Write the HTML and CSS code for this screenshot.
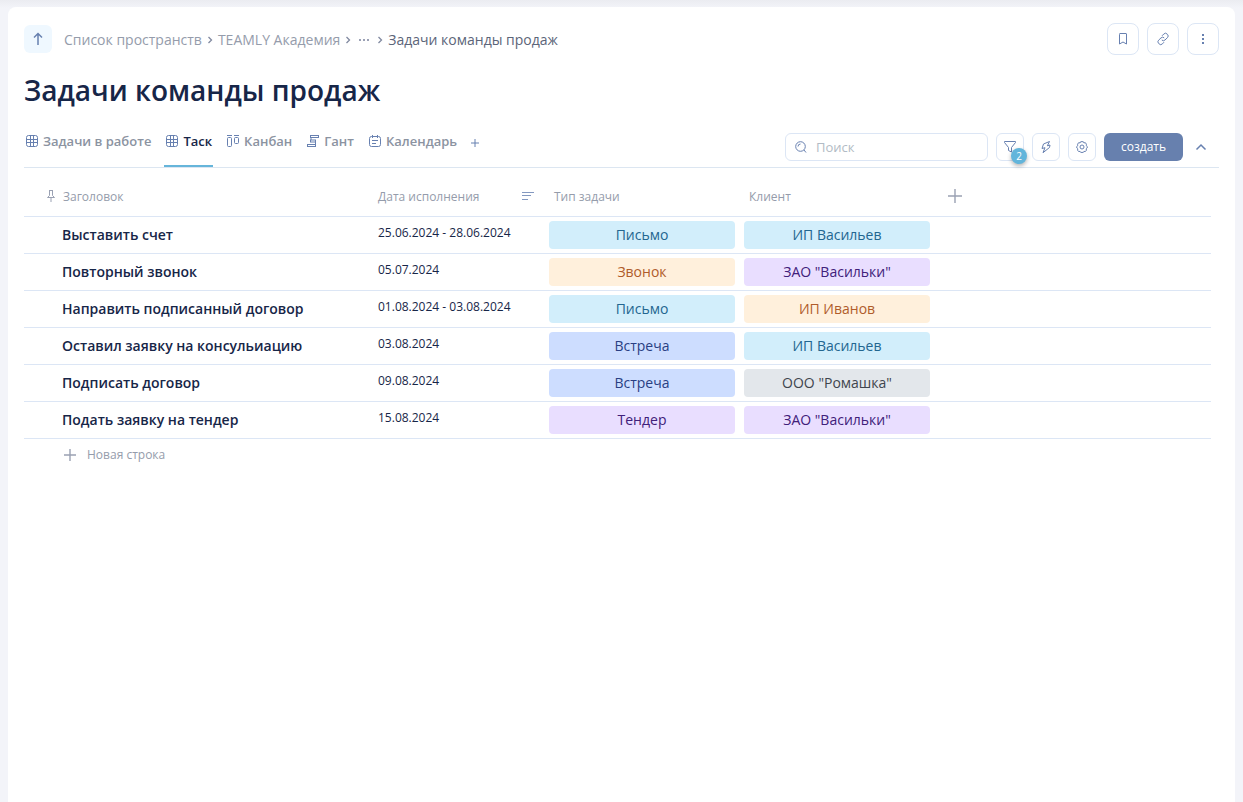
FILE: index.html
```html
<!DOCTYPE html>
<html lang="ru">
<head>
<meta charset="utf-8">
<title>Задачи команды продаж</title>
<link rel="stylesheet" href="styles.css">
</head>
<body>
<main class="panel">
  <header class="topbar">
    <button class="up" type="button" aria-label="Вверх">
      <svg width="16" height="16" viewBox="0 0 16 16"><path d="M8 14V2.500M4 6.500l4-4 4 4"/></svg>
    </button>
    <nav class="crumbs" aria-label="Путь">
      <a href="#">Список пространств</a>
      <svg class="sep" width="6" height="8" viewBox="0 0 6 8"><path d="M1.500 1l3 3-3 3"/></svg>
      <a href="#">TEAMLY Академия</a>
      <svg class="sep" width="6" height="8" viewBox="0 0 6 8"><path d="M1.500 1l3 3-3 3"/></svg>
      <button class="more" type="button" aria-label="Ещё">
        <svg width="12" height="8" viewBox="0 0 12 8"><path d="M1 3h2v2H1zM5 3h2v2H5zM9 3h2v2H9z"/></svg>
      </button>
      <svg class="sep" width="6" height="8" viewBox="0 0 6 8"><path d="M1.500 1l3 3-3 3"/></svg>
      <span class="current">Задачи команды продаж</span>
    </nav>
    <div class="actions">
      <button class="square" type="button" aria-label="В закладки">
        <svg width="16" height="16" viewBox="0 0 16 16"><path d="M4.500 3.500v9.500l3.500-2 3.500 2V3a.5.5 0 0 0-.5-.5H5a.5.5 0 0 0-.5.5z"/></svg>
      </button>
      <button class="square" type="button" aria-label="Скопировать ссылку">
        <svg width="16" height="16" viewBox="0 0 16 16"><path d="M7 4.800l1.800-1.800a2.300 2.300 0 0 1 3.300 0l.4.400a2.300 2.300 0 0 1 0 3.200L10 9a2.300 2.300 0 0 1-3.200 0M9 11.200l-1.600 1.700a2.300 2.300 0 0 1-3.300 0l-.5-.5a2.300 2.300 0 0 1 0-3.200L6 6.900a2.300 2.300 0 0 1 3.200 0"/></svg>
      </button>
      <button class="square" type="button" aria-label="Меню">
        <svg class="solid" width="16" height="16" viewBox="0 0 16 16"><path d="M7 3h2v2H7zM7 7h2v2H7zM7 11h2v2H7z"/></svg>
      </button>
    </div>
  </header>

  <h1>Задачи команды продаж</h1>

  <div class="viewbar">
    <nav class="tabs" aria-label="Представления">
      <a class="tab" href="#"><svg width="14" height="14" viewBox="0 0 14 14"><rect x="1.500" y="1.500" width="11" height="11" rx="2"/><path d="M5.500 1.500v11M8.500 1.500v11M1.500 5.500h11M1.500 8.500h11"/></svg>Задачи в работе</a>
      <a class="tab active" href="#" aria-current="page"><svg width="14" height="14" viewBox="0 0 14 14"><rect x="1.500" y="1.500" width="11" height="11" rx="2"/><path d="M5.500 1.500v11M8.500 1.500v11M1.500 5.500h11M1.500 8.500h11"/></svg>Таск</a>
      <a class="tab" href="#"><svg width="14" height="14" viewBox="0 0 14 14"><path d="M1 1.500h5M8 1.500h5"/><rect x="1.500" y="3.500" width="4" height="9" rx="1"/><rect x="8.500" y="3.500" width="4" height="6" rx="1"/></svg>Канбан</a>
      <a class="tab" href="#"><svg width="14" height="14" viewBox="0 0 14 14"><rect x="4.500" y="1.500" width="8" height="2"/><rect x="4.500" y="6" width="5" height="2"/><rect x="1.500" y="10.500" width="8" height="2"/><path d="M5 3.500v2.500M9.500 8v2.500"/></svg>Гант</a>
      <a class="tab" href="#"><svg width="14" height="14" viewBox="0 0 14 14"><rect x="1.500" y="2.500" width="11" height="10" rx="2"/><path d="M4.500 1v3M9.500 1v3M4 6.500h6M4 9.500h4"/></svg>Календарь</a>
      <button class="addview" type="button" aria-label="Добавить представление"><svg width="10" height="10" viewBox="0 0 10 10"><path d="M5 1v8M1 5h8"/></svg></button>
    </nav>
    <div class="tools">
      <label class="search">
        <svg width="14" height="14" viewBox="0 0 14 14"><circle cx="6.500" cy="6.500" r="4.800"/><path d="M10 10l2 2.500M4 6.500a2.500 2.500 0 0 1 2.500-2.500"/></svg>
        <input type="text" placeholder="Поиск" aria-label="Поиск">
      </label>
      <button class="tool" type="button" aria-label="Фильтр">
        <svg width="14" height="14" viewBox="0 0 14 14"><path d="M1.500 1.500h11v1L8.500 7.500v4.500l-3-1.500v-3L1.500 2.500z"/></svg>
        <span class="count">2</span>
      </button>
      <button class="tool" type="button" aria-label="Автоматизация">
        <svg width="14" height="14" viewBox="0 0 14 14"><path d="M10.500 1.500L4.500 4l-1.500 4.500 3-.8-2 5 6.500-5.200.5-2.500-2.700.8z"/></svg>
      </button>
      <button class="tool" type="button" aria-label="Настройки">
        <svg width="14" height="14" viewBox="0 0 14 14"><circle cx="7" cy="7" r="2"/><path d="M5.700 1.700h2.600l.6 1.200 1.500-.2 1 1.500-.2 1.300 1 .9v1.600l-1 .9.200 1.300-1 1.300-1.500-.1-.6 1H5.700l-.6-1-1.500.1-1-1.300.2-1.300-1-.9V6.400l1-.9-.2-1.300 1-1.500 1.500.2z"/></svg>
      </button>
      <button class="create" type="button">создать</button>
      <button class="collapse" type="button" aria-label="Свернуть"><svg width="12" height="8" viewBox="0 0 12 8"><path d="M1.500 6.500L6 2l4.500 4.500"/></svg></button>
    </div>
  </div>

  <div class="tablewrap">
    <table>
      <colgroup><col class="c-title"><col class="c-date"><col class="c-tag"><col class="c-tag"><col></colgroup>
      <thead>
        <tr>
          <th><span class="head pinned"><svg width="10" height="14" viewBox="0 0 10 14"><path d="M3 1.500h4M3.500 1.500v5l-2 2h7l-2-2v-5M5 8.500V13"/></svg>Заголовок</span></th>
          <th><span class="head sorted">Дата исполнения<svg width="12" height="10" viewBox="0 0 12 10"><path d="M0 1.500h12M0 4.500h9M0 8.500h6"/></svg></span></th>
          <th>Тип задачи</th>
          <th>Клиент</th>
          <th><button class="addcol" type="button" aria-label="Добавить колонку"><svg width="14" height="14" viewBox="0 0 14 14"><path d="M7 0v14M0 7h14"/></svg></button></th>
        </tr>
      </thead>
      <tbody>
        <tr><td class="name">Выставить счет</td><td class="date">25.06.2024 - 28.06.2024</td><td class="cell"><span class="tag sky">Письмо</span></td><td class="cell"><span class="tag sky">ИП Васильев</span></td><td></td></tr>
        <tr><td class="name">Повторный звонок</td><td class="date">05.07.2024</td><td class="cell"><span class="tag sand">Звонок</span></td><td class="cell"><span class="tag violet">ЗАО "Васильки"</span></td><td></td></tr>
        <tr><td class="name">Направить подписанный договор</td><td class="date">01.08.2024 - 03.08.2024</td><td class="cell"><span class="tag sky">Письмо</span></td><td class="cell"><span class="tag sand">ИП Иванов</span></td><td></td></tr>
        <tr><td class="name">Оставил заявку на консульиацию</td><td class="date">03.08.2024</td><td class="cell"><span class="tag blue">Встреча</span></td><td class="cell"><span class="tag sky">ИП Васильев</span></td><td></td></tr>
        <tr><td class="name">Подписать договор</td><td class="date">09.08.2024</td><td class="cell"><span class="tag blue">Встреча</span></td><td class="cell"><span class="tag grey">ООО "Ромашка"</span></td><td></td></tr>
        <tr><td class="name">Подать заявку на тендер</td><td class="date">15.08.2024</td><td class="cell"><span class="tag violet">Тендер</span></td><td class="cell"><span class="tag violet">ЗАО "Васильки"</span></td><td></td></tr>
      </tbody>
    </table>
    <button class="newrow" type="button"><svg width="12" height="12" viewBox="0 0 12 12"><path d="M6 0v12M0 6h12"/></svg>Новая строка</button>
  </div>
</main>
</body>
</html>
```
FILE: styles.css
```css
* { box-sizing: border-box; }

body {
  margin: 0;
  min-height: 100vh;
  display: flex;
  padding: 7px 8px 0;
  background: linear-gradient(#ebecf1, #f3f4f9 8px);
  font-family: "Open Sans", "Noto Sans", sans-serif;
  font-size: 14px;
  color: #172648;
}

button {
  font: inherit;
  border: 0;
  padding: 0;
  background: none;
  color: inherit;
  cursor: pointer;
}

a { color: inherit; text-decoration: none; }

svg {
  display: block;
  flex: none;
  fill: none;
  stroke: #6780b0;
}

.panel {
  flex: 1;
  min-width: 0;
  padding: 16px 16px 0;
  background: #fff;
  border-radius: 8px 8px 0 0;
}

.topbar { display: flex; align-items: center; }

.up {
  display: grid;
  place-items: center;
  width: 28px;
  height: 28px;
  border-radius: 6px;
  background: #eff8ff;
}

.up svg { stroke-width: 1.500; }

.crumbs {
  display: flex;
  align-items: center;
  margin-left: 12px;
  color: #959cab;
}

.crumbs .sep { margin: 2px 5px 0; stroke: #8089a0; stroke-width: 1.300; }
.more svg { margin: 2px 2px 0; fill: #9ba1b5; stroke: none; }
.current { color: #5c6579; }

.actions { display: flex; gap: 8px; margin-left: auto; }

.square, .tool {
  display: grid;
  place-items: center;
  border: 1px solid #dce6f5;
  background: #fff;
}

.square { width: 32px; height: 32px; border-radius: 8px; }
svg.solid { fill: #6780b0; stroke: none; }

h1 {
  margin: 15px 0 0;
  font-size: 28px;
  line-height: 40px;
  font-weight: 600;
}

.viewbar {
  display: flex;
  justify-content: space-between;
  margin-top: 17px;
  border-bottom: 1px solid #dce6f1;
}

.tabs { display: flex; gap: 12px; height: 40px; }

.tab {
  display: flex;
  align-items: flex-start;
  gap: 4px;
  height: 40px;
  padding: 5px 1px 0;
  font-size: 13px;
  line-height: 18px;
  font-weight: 600;
  color: #8b93a1;
}

.tab svg { margin-top: 2px; }

.tab.active {
  color: #172648;
  border-bottom: 2px solid #66b5da;
}

.addview { align-self: flex-start; margin-top: 11px; }

.tools { display: flex; align-items: flex-start; gap: 8px; padding-top: 6px; }

.search {
  display: flex;
  align-items: center;
  gap: 8px;
  width: 203px;
  height: 28px;
  padding: 0 8px;
  border: 1px solid #dce6f5;
  border-radius: 6px;
}

.search input {
  flex: 1;
  min-width: 0;
  padding: 0;
  border: 0;
  outline: 0;
  font: inherit;
  font-size: 13px;
  color: inherit;
}

.search input::placeholder { color: #b2bbc5; opacity: 1; }

.tool { position: relative; width: 28px; height: 28px; border-radius: 6px; }

.count {
  position: absolute;
  top: 14px;
  left: 14px;
  width: 16px;
  height: 16px;
  border-radius: 8px;
  background: #62b5db;
  box-shadow: 0 2px 4px rgba(0, 0, 0, 0.3);
  color: #fff;
  font-size: 10px;
  line-height: 16px;
}

.create {
  width: 79px;
  height: 28px;
  padding-bottom: 2px;
  border-radius: 6px;
  background: #6780ae;
  color: #fff;
  font-size: 12px;
  font-weight: 500;
}

.collapse { display: grid; place-items: center; width: 20px; height: 28px; margin-right: 8px; }
.collapse svg { stroke-width: 1.500; }

.tablewrap { padding-right: 8px; }

table { width: 100%; table-layout: fixed; border-collapse: collapse; }
.c-title { width: 345px; }
.c-date { width: 176px; }
.c-tag { width: 195px; }

th, td { text-align: left; border-bottom: 1px solid #dce6f5; }

th {
  height: 48px;
  padding: 9px 9px 0;
  font-size: 12px;
  font-weight: 400;
  color: #959cab;
}

.head { display: flex; align-items: center; }
.pinned { gap: 7px; padding-left: 13px; }
.pinned svg { stroke: #9aa1b3; }
.sorted { justify-content: space-between; padding-right: 2px; }
.sorted svg { stroke: #8398c0; }
.addcol { display: block; margin-left: 4px; }
.addcol svg, .newrow svg { stroke: #9aa1b3; stroke-width: 1.400; }

td { height: 37px; padding: 0; }
.name { padding-left: 38px; font-weight: 600; }
.date { padding: 8px 9px 0; vertical-align: top; font-size: 12px; line-height: 16px; }
.cell { padding: 0 5px 0 4px; }

.tag {
  display: block;
  height: 28px;
  border-radius: 4px;
  line-height: 28px;
  text-align: center;
}

.sky { background: #d2eefb; color: #236690; }
.sand { background: #fff0dc; color: #b05c2b; }
.violet { background: #e9deff; color: #40207a; }
.blue { background: #cdddff; color: #293f83; }
.grey { background: #e3e7eb; color: #3f454d; }

.newrow {
  display: flex;
  align-items: center;
  gap: 11px;
  margin: 7px 0 0 40px;
  font-size: 12px;
  line-height: 18px;
  color: #959cab;
}
```
